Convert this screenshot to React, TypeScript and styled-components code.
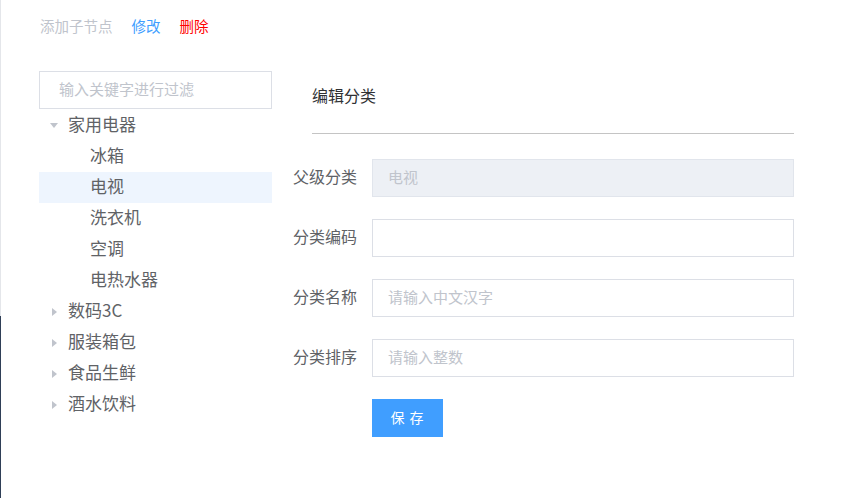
import React, { useState } from 'react';
import styled, { createGlobalStyle } from 'styled-components';

type TreeNode = { label: string; children?: TreeNode[] };

const treeData: TreeNode[] = [
	{
		label: '家用电器',
		children: [
			{ label: '冰箱' },
			{ label: '电视' },
			{ label: '洗衣机' },
			{ label: '空调' },
			{ label: '电热水器' },
		],
	},
	{ label: '数码3C', children: [{ label: '手机' }] },
	{ label: '服装箱包', children: [{ label: '男装' }] },
	{ label: '食品生鲜', children: [{ label: '水果' }] },
	{ label: '酒水饮料', children: [{ label: '白酒' }] },
];

const GlobalStyle = createGlobalStyle`
	html, body {
		margin: 0;
		padding: 0;
		background: #ffffff;
	}
	body {
		font-family: 'Noto Sans CJK SC', 'Noto Sans', sans-serif;
	}
	* {
		box-sizing: border-box;
	}
`;

export default function App() {
	const [filter, setFilter] = useState('');
	const [current] = useState('电视');

	return (
		<Page>
			<GlobalStyle />
			<EdgeStrip>
				<EdgeTop />
				<EdgeBottom />
			</EdgeStrip>
			<Main>
				<Actions>
					<ActionButton tone="disabled">添加子节点</ActionButton>
					<ActionButton tone="primary">修改</ActionButton>
					<ActionButton tone="danger">删除</ActionButton>
				</Actions>
				<Body>
					<TreePanel>
						<FilterInput
							placeholder="输入关键字进行过滤"
							value={filter}
							onChange={(e) => setFilter(e.target.value)}
						/>
						<TreeList>
							{treeData.map((node, i) => (
								<React.Fragment key={node.label}>
									<TreeRow level={0}>
										<Caret open={i === 0} />
										<TreeLabel>{node.label}</TreeLabel>
									</TreeRow>
									{i === 0 &&
										node.children?.map((child) => (
											<TreeRow
												key={child.label}
												level={1}
												active={child.label === current}
											>
												<CaretSpace />
												<TreeLabel>{child.label}</TreeLabel>
											</TreeRow>
										))}
								</React.Fragment>
							))}
						</TreeList>
					</TreePanel>
					<EditPanel>
						<PanelTitle>编辑分类</PanelTitle>
						<Divider />
						<Form>
							<FormRow>
								<FieldLabel>父级分类</FieldLabel>
								<TextInput disabled value="电视" readOnly />
							</FormRow>
							<FormRow>
								<FieldLabel>分类编码</FieldLabel>
								<TextInput defaultValue="" />
							</FormRow>
							<FormRow>
								<FieldLabel>分类名称</FieldLabel>
								<TextInput placeholder="请输入中文汉字" />
							</FormRow>
							<FormRow>
								<FieldLabel>分类排序</FieldLabel>
								<TextInput placeholder="请输入整数" />
							</FormRow>
							<FormRow>
								<FieldLabel />
								<SaveButton>保 存</SaveButton>
							</FormRow>
						</Form>
					</EditPanel>
				</Body>
			</Main>
		</Page>
	);
}

const Page = styled.div`
	display: flex;
	min-height: 100vh;
	width: 100%;
`;

const EdgeStrip = styled.div`
	display: flex;
	flex-direction: column;
	width: 1px;
	flex-shrink: 0;
`;

const EdgeTop = styled.div`
	height: 316px;
	background: #e4e6ea;
`;

const EdgeBottom = styled.div`
	flex: 1;
	background: #2f3f57;
`;

const Main = styled.div`
	flex: 1;
	display: flex;
	flex-direction: column;
	padding: 16px 0 0 38px;
`;

const Actions = styled.div`
	display: flex;
	align-items: center;
	gap: 19px;
	height: 22px;
	padding-left: 1px;
`;

const ActionButton = styled.button<{ tone: 'disabled' | 'primary' | 'danger' }>`
	border: none;
	background: none;
	padding: 0 0 2px;
	font-family: inherit;
	font-size: 14.5px;
	line-height: 20px;
	cursor: ${({ tone }) => (tone === 'disabled' ? 'not-allowed' : 'pointer')};
	color: ${({ tone }) =>
		tone === 'disabled' ? '#c0c4cc' : tone === 'primary' ? '#409eff' : '#ff0000'};
`;

const Body = styled.div`
	display: flex;
	margin-top: 33px;
`;

const TreePanel = styled.div`
	width: 233px;
	display: flex;
	flex-direction: column;
`;

const FilterInput = styled.input`
	height: 38px;
	width: 100%;
	border: 1px solid #dcdfe6;
	border-radius: 0;
	padding: 0 19px 3px;
	font-family: inherit;
	font-size: 15px;
	color: #606266;
	outline: none;
	&::placeholder {
		color: #c0c4cc;
	}
`;

const TreeList = styled.div`
	display: flex;
	flex-direction: column;
	padding-top: 1px;
`;

const TreeRow = styled.div<{ level: number; active?: boolean }>`
	display: flex;
	align-items: center;
	height: 31px;
	padding-left: ${({ level }) => 8 + level * 22}px;
	background: ${({ active }) => (active ? '#eef5fe' : 'transparent')};
	cursor: pointer;
`;

const Caret = styled.span<{ open: boolean }>`
	width: 14px;
	height: 14px;
	margin-right: 7px;
	display: flex;
	align-items: center;
	justify-content: center;
	&::before {
		content: '';
		width: 0;
		height: 0;
		${({ open }) =>
			open
				? `border-left: 4px solid transparent;
				   border-right: 4px solid transparent;
				   border-top: 5px solid #c0c4cc;`
				: `border-top: 4px solid transparent;
				   border-bottom: 4px solid transparent;
				   border-left: 5px solid #c0c4cc;`}
	}
`;

const CaretSpace = styled.span`
	width: 14px;
	margin-right: 7px;
`;

const TreeLabel = styled.span`
	font-size: 17px;
	color: #606266;
	line-height: 27px;
	padding-bottom: 4px;
	white-space: nowrap;
`;

const EditPanel = styled.div`
	width: 504px;
	margin-left: 18px;
	display: flex;
	flex-direction: column;
`;

const PanelTitle = styled.div`
	padding: 12px 0 0 22px;
	font-size: 16px;
	line-height: 24px;
	color: #303133;
`;

const Divider = styled.div`
	height: 1px;
	margin: 26px 0 0 22px;
	background: #c4c4c4;
`;

const Form = styled.div`
	display: flex;
	flex-direction: column;
	gap: 22px;
	margin-top: 25px;
`;

const FormRow = styled.div`
	display: flex;
	align-items: center;
`;

const FieldLabel = styled.label`
	width: 82px;
	flex-shrink: 0;
	padding: 0 15px 4px 0;
	text-align: right;
	font-size: 16px;
	color: #606266;
	white-space: nowrap;
`;

const TextInput = styled.input`
	flex: 1;
	height: 38px;
	border: 1px solid #dcdfe6;
	border-radius: 0;
	padding: 0 15px 4px;
	font-family: inherit;
	font-size: 15px;
	color: #606266;
	background: #ffffff;
	outline: none;
	&::placeholder {
		color: #c0c4cc;
	}
	&:disabled {
		background: #edf0f5;
		border-color: #e1e5ec;
		color: #c0c4cc;
		-webkit-text-fill-color: #c0c4cc;
		opacity: 1;
	}
`;

const SaveButton = styled.button`
	width: 71px;
	height: 38px;
	border: none;
	border-radius: 0;
	background: #409eff;
	color: #ffffff;
	font-family: inherit;
	font-size: 14px;
	letter-spacing: 1px;
	padding: 0 0 2px;
	cursor: pointer;
`;
